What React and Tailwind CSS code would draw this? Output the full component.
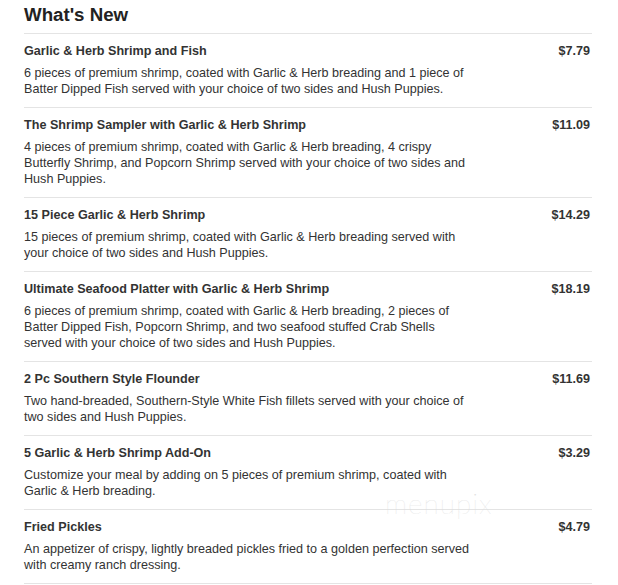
import React from "react";

const items = [
  {
    title: "Garlic & Herb Shrimp and Fish",
    price: "$7.79",
    lines: [
      "6 pieces of premium shrimp, coated with Garlic & Herb breading and 1 piece of",
      "Batter Dipped Fish served with your choice of two sides and Hush Puppies.",
    ],
  },
  {
    title: "The Shrimp Sampler with Garlic & Herb Shrimp",
    price: "$11.09",
    lines: [
      "4 pieces of premium shrimp, coated with Garlic & Herb breading, 4 crispy",
      "Butterfly Shrimp, and Popcorn Shrimp served with your choice of two sides and",
      "Hush Puppies.",
    ],
  },
  {
    title: "15 Piece Garlic & Herb Shrimp",
    price: "$14.29",
    lines: [
      "15 pieces of premium shrimp, coated with Garlic & Herb breading served with",
      "your choice of two sides and Hush Puppies.",
    ],
  },
  {
    title: "Ultimate Seafood Platter with Garlic & Herb Shrimp",
    price: "$18.19",
    lines: [
      "6 pieces of premium shrimp, coated with Garlic & Herb breading, 2 pieces of",
      "Batter Dipped Fish, Popcorn Shrimp, and two seafood stuffed Crab Shells",
      "served with your choice of two sides and Hush Puppies.",
    ],
  },
  {
    title: "2 Pc Southern Style Flounder",
    price: "$11.69",
    lines: [
      "Two hand-breaded, Southern-Style White Fish fillets served with your choice of",
      "two sides and Hush Puppies.",
    ],
  },
  {
    title: "5 Garlic & Herb Shrimp Add-On",
    price: "$3.29",
    lines: [
      "Customize your meal by adding on 5 pieces of premium shrimp, coated with",
      "Garlic & Herb breading.",
    ],
  },
  {
    title: "Fried Pickles",
    price: "$4.79",
    lines: [
      "An appetizer of crispy, lightly breaded pickles fried to a golden perfection served",
      "with creamy ranch dressing.",
    ],
  },
];

export default function App() {
  return (
    <div
      className="relative w-[618px] h-[585px] overflow-hidden bg-white pl-[24px] pr-[26px] text-[#333]"
      style={{ fontFamily: '"Liberation Sans", Arial, sans-serif' }}
    >
      <h1 className="pt-[4px] pb-[7px] text-[18.7px] leading-[22px] font-bold text-[#222]">
        What's New
      </h1>
      <div className="flex flex-col">
        {items.map((it) => (
          <div key={it.title} className="border-t border-[#e4e4e4] pt-[9px] pb-[10px]">
            <div className="flex justify-between items-start text-[12.6px] leading-4 font-bold">
              <span>{it.title}</span>
              <span className="pr-[2px]">{it.price}</span>
            </div>
            <div className="mt-[6px] text-[12.6px] leading-4 text-[#333]">
              {it.lines.map((l) => (
                <div key={l} className="whitespace-nowrap">{l}</div>
              ))}
            </div>
          </div>
        ))}
        <div className="border-t border-[#e4e4e4]" />
      </div>
      <div
        className="absolute left-[385px] top-[489px] text-[28px] leading-[28px] text-[#dedede] tracking-[1px]"
        style={{ fontFamily: "Lato, sans-serif", fontWeight: 100 }}
      >
        menupix
      </div>
    </div>
  );
}
